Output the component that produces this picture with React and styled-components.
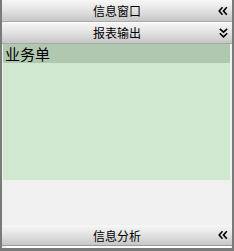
import React from "react";
import styled, { createGlobalStyle } from "styled-components";

const Global = createGlobalStyle`
  html, body { margin: 0; padding: 0; background: #f0f0f0; }
  * { box-sizing: border-box; }
`;

const Frame = styled.div`
  width: 234px;
  height: 251px;
  display: flex;
  flex-direction: column;
  background: #f0f0f0;
  border-left: 2px solid #7a7a7a;
  border-right: 2px solid #7a7a7a;
  border-bottom: 3px solid #7a7a7a;
  font-family: "Noto Sans CJK SC", "Noto Sans", sans-serif;
  color: #000;
`;

const Header = styled.div`
  position: relative;
  flex: none;
  height: ${(p) => p.$h || 21}px;
  display: flex;
  align-items: center;
  justify-content: center;
  background: linear-gradient(#f7f7f7 0%, #e2e2e2 50%, #c6c6c6 100%);
  border-bottom: 1px solid ${(p) => p.$line || "#a8a8a8"};
  font-size: 12px;
  line-height: 1;
  &::before {
    content: "";
    display: ${(p) => (p.$divider ? "block" : "none")};
    position: absolute;
    left: 4px;
    right: 1px;
    top: 0;
    height: 1px;
    background: #ffffff;
  }
`;

const Title = styled.span`
  padding-top: 1px;
`;

const Toggle = styled.span`
  position: absolute;
  right: 4px;
  top: 50%;
  transform: translateY(-50%);
  display: flex;
  line-height: 0;
`;

const BottomLine = styled.div`
  flex: none;
  height: 2px;
  margin: 0 1px 0 4px;
  background: #ffffff;
`;

const List = styled.div`
  flex: none;
  height: 136px;
  margin: 0 2px 0 1px;
  background: #cfe8cf;
  display: flex;
  flex-direction: column;
`;

const Row = styled.div`
  height: 19px;
  display: flex;
  align-items: center;
  padding-left: 2px;
  font-size: 15px;
  background: ${(p) => (p.$selected ? "#b0c8b0" : "transparent")};
`;

const Spacer = styled.div`
  flex: 1;
`;

const LeftDouble = () => (
  <svg width="10" height="9" viewBox="0 0 10 9">
    <polyline points="4.5,0.8 1.2,4.5 4.5,8.2" fill="none" stroke="#000" strokeWidth="1.6" />
    <polyline points="8.8,0.8 5.5,4.5 8.8,8.2" fill="none" stroke="#000" strokeWidth="1.6" />
  </svg>
);

const DownDouble = () => (
  <svg width="9" height="10" viewBox="0 0 9 10">
    <polyline points="0.8,0.8 4.5,4.2 8.2,0.8" fill="none" stroke="#000" strokeWidth="1.6" />
    <polyline points="0.8,5.2 4.5,8.8 8.2,5.2" fill="none" stroke="#000" strokeWidth="1.6" />
  </svg>
);

export default function App() {
  return (
    <>
      <Global />
      <Frame>
        <Header $h={22}>
          <Title>信息窗口</Title>
          <Toggle><LeftDouble /></Toggle>
        </Header>
        <Header $divider $h={22}>
          <Title>报表输出</Title>
          <Toggle><DownDouble /></Toggle>
        </Header>
        <List>
          <Row $selected>业务单</Row>
        </List>
        <Spacer />
        <Header $h={21} $line="#9a9a9a">
          <Title>信息分析</Title>
          <Toggle><LeftDouble /></Toggle>
        </Header>
        <BottomLine />
      </Frame>
    </>
  );
}
